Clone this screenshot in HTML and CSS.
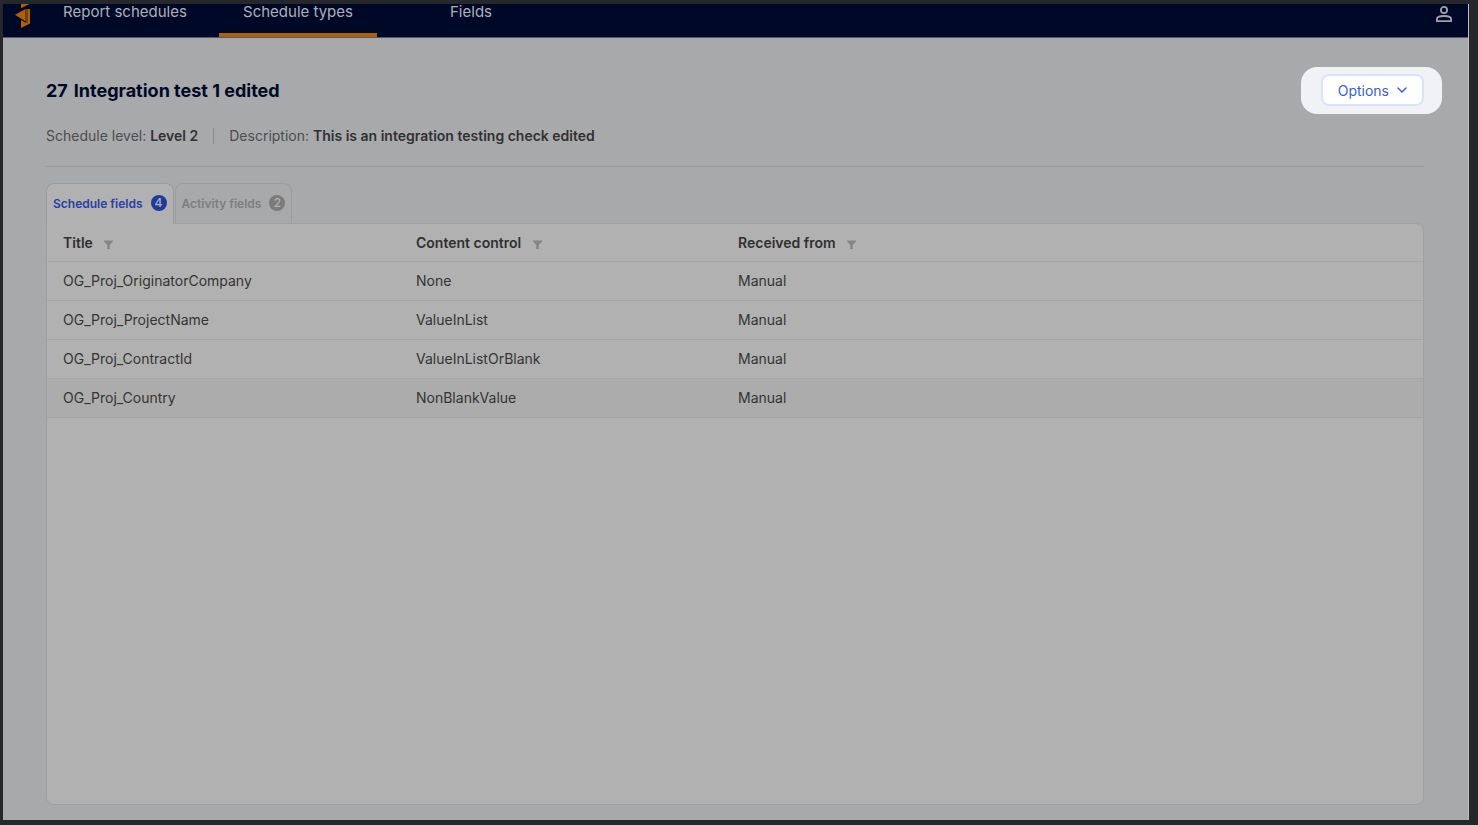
FILE: index.html
```html
<!DOCTYPE html>
<html lang="en">
<head>
    <meta charset="UTF-8">
    <meta name="viewport" content="width=device-width, initial-scale=1.0">
    <title>Schedule types</title>
    <link rel="stylesheet" href="styles.css">
</head>
<body>
    <svg width="0" height="0" class="sprite" aria-hidden="true">
        <symbol id="icon-filter" viewBox="0 0 9 9"><path d="M0 0.5h9v1L5.7 5v4H3.3V5L0 1.5z"/></symbol>
    </svg>

    <div class="app">
        <header class="navbar">
            <a href="#" class="logo" aria-label="Home">
                <svg width="16" height="24" viewBox="0 0 16 24">
                    <path d="M6 0h8.500L6 4.300z"/>
                    <path d="M0 10.800L10.600 5v12.500z"/>
                    <path d="M11.300 5H15v14.500L6 24v-8l5.300 3z"/>
                    <path d="M12.500 5v14" fill="none" stroke="#5c3413" stroke-width="0.700"/>
                </svg>
            </a>
            <nav class="nav-links">
                <a href="#" class="nav-link">Report schedules</a>
                <a href="#" class="nav-link active">Schedule types</a>
                <a href="#" class="nav-link">Fields</a>
            </nav>
            <button type="button" class="user-button" aria-label="Account">
                <svg width="16" height="16" viewBox="0 0 16 16" fill="none" stroke="currentColor" stroke-width="1.800">
                    <circle cx="8" cy="4" r="3.100"/>
                    <path d="M0.900 15.100v-2c0-2 3.500-3.100 7.100-3.100s7.100 1.100 7.100 3.100v2z"/>
                </svg>
            </button>
        </header>

        <main class="content">
            <div class="page-header">
                <h1><span>27</span> <span>Integration test 1 edited</span></h1>
                <div class="spotlight">
                    <button type="button" class="options-button">
                        Options
                        <svg width="10" height="6" viewBox="0 0 10 6" fill="none" stroke="currentColor" stroke-width="1.500" stroke-linecap="round" stroke-linejoin="round"><path d="M1 1l4 4 4-4"/></svg>
                    </button>
                </div>
            </div>

            <div class="details">
                <span>Schedule level: <strong>Level 2</strong></span>
                <span class="divider"></span>
                <span>Description: <strong>This is an integration testing check edited</strong></span>
            </div>

            <div class="tabs">
                <button type="button" class="tab active">Schedule fields <span class="count">4</span></button>
                <button type="button" class="tab">Activity fields <span class="count">2</span></button>
            </div>

            <div class="card">
                <table>
                    <thead>
                        <tr>
                            <th class="col-title">Title <svg class="filter"><use href="#icon-filter"/></svg></th>
                            <th class="col-control">Content control <svg class="filter"><use href="#icon-filter"/></svg></th>
                            <th>Received from <svg class="filter"><use href="#icon-filter"/></svg></th>
                        </tr>
                    </thead>
                    <tbody>
                        <tr><td>OG_Proj_OriginatorCompany</td><td>None</td><td>Manual</td></tr>
                        <tr><td>OG_Proj_ProjectName</td><td>ValueInList</td><td>Manual</td></tr>
                        <tr><td>OG_Proj_ContractId</td><td>ValueInListOrBlank</td><td>Manual</td></tr>
                        <tr class="hovered"><td>OG_Proj_Country</td><td>NonBlankValue</td><td>Manual</td></tr>
                    </tbody>
                </table>
            </div>
        </main>
    </div>
</body>
</html>
```
FILE: styles.css
```css
* { box-sizing: border-box; }
body { margin: 0; padding: 4px 9px 5px 3px; min-height: 100vh; display: flex; background: #26272b; font-family: Inter, "Liberation Sans", sans-serif; font-size: 14px; color: #343434; }
button { font-family: inherit; cursor: pointer; }
svg { display: block; }
.sprite { position: absolute; }
.app { flex: 1; display: flex; flex-direction: column; background: #a8a9ab; border-right: 1px solid #bcbdbf; }

/* Top bar */
.navbar { display: flex; align-items: flex-start; height: 34px; padding: 0 16px 0 12px; background: #000828; border-bottom: 1px solid #555a70; }
.logo { width: 31px; fill: #b16005; }
.nav-links { flex: 1; display: flex; gap: 15px; }
.nav-link { width: 158px; height: 33px; line-height: 16px; text-align: center; font-size: 15px; color: #aeb0b7; text-decoration: none; border-bottom: 4px solid transparent; }
.nav-link.active { border-bottom-color: #b16005; }
.user-button { padding: 2px 0 0; border: none; background: none; color: #9fa1aa; }

/* Heading */
.content { flex: 1; display: flex; flex-direction: column; padding: 29px 44px 15px 43px; }
.page-header { display: flex; justify-content: space-between; align-items: center; }
h1 { display: flex; gap: 6px; margin: 0; font-size: 18px; line-height: 24px; font-weight: 700; color: #000828; }
.spotlight { margin-right: -18px; padding: 7px 18px 8px 20px; border-radius: 16px; background: #f1f2f6; }
.options-button { display: flex; align-items: center; gap: 8px; height: 32px; padding: 0 15px; border: 2px solid #dbe2fc; border-radius: 8px; background: #fff; color: #3a5bdb; font-size: 14px; }
.details { display: flex; align-items: center; gap: 15px; margin-bottom: 16px; padding: 12px 0 20px; line-height: 20px; color: #4c4d4f; border-bottom: 1px solid #989a9e; }
.details strong { font-weight: 600; color: #303133; }
.divider { width: 1px; height: 16px; background: #87888b; }

/* Tabs */
.tabs { display: flex; gap: 1px; }
.tab { display: flex; align-items: center; gap: 8px; height: 40px; padding: 0 6px 1px; border: 1px solid #9b9c9f; border-bottom: none; border-radius: 8px 8px 0 0; background: none; font-size: 12px; font-weight: 600; color: #7d7e80; }
.tab.active { z-index: 1; margin-bottom: -1px; height: 41px; padding-bottom: 2px; background: #b1b1b1; color: #263fa3; }
.count { width: 16px; height: 16px; border-radius: 50%; background: #7b7b7b; color: #b1b1b1; line-height: 16px; text-align: center; font-weight: 500; }
.tab.active .count { background: #213a9e; }

/* Table */
.card { flex: 1; border: 1px solid #9fa0a2; border-radius: 0 8px 8px 8px; background: #b1b1b1; }
table { width: 100%; border-collapse: collapse; table-layout: fixed; }
th, td { height: 39px; padding: 0 16px; text-align: left; border-bottom: 1px solid #a5a5a6; }
th { height: 37px; font-weight: 600; color: #303030; }
.col-title { width: 353px; }
.col-control { width: 322px; }
.hovered { background: #acacac; }
.filter { display: inline-block; width: 9px; height: 9px; margin-left: 8px; vertical-align: -1px; fill: #858585; }
```
